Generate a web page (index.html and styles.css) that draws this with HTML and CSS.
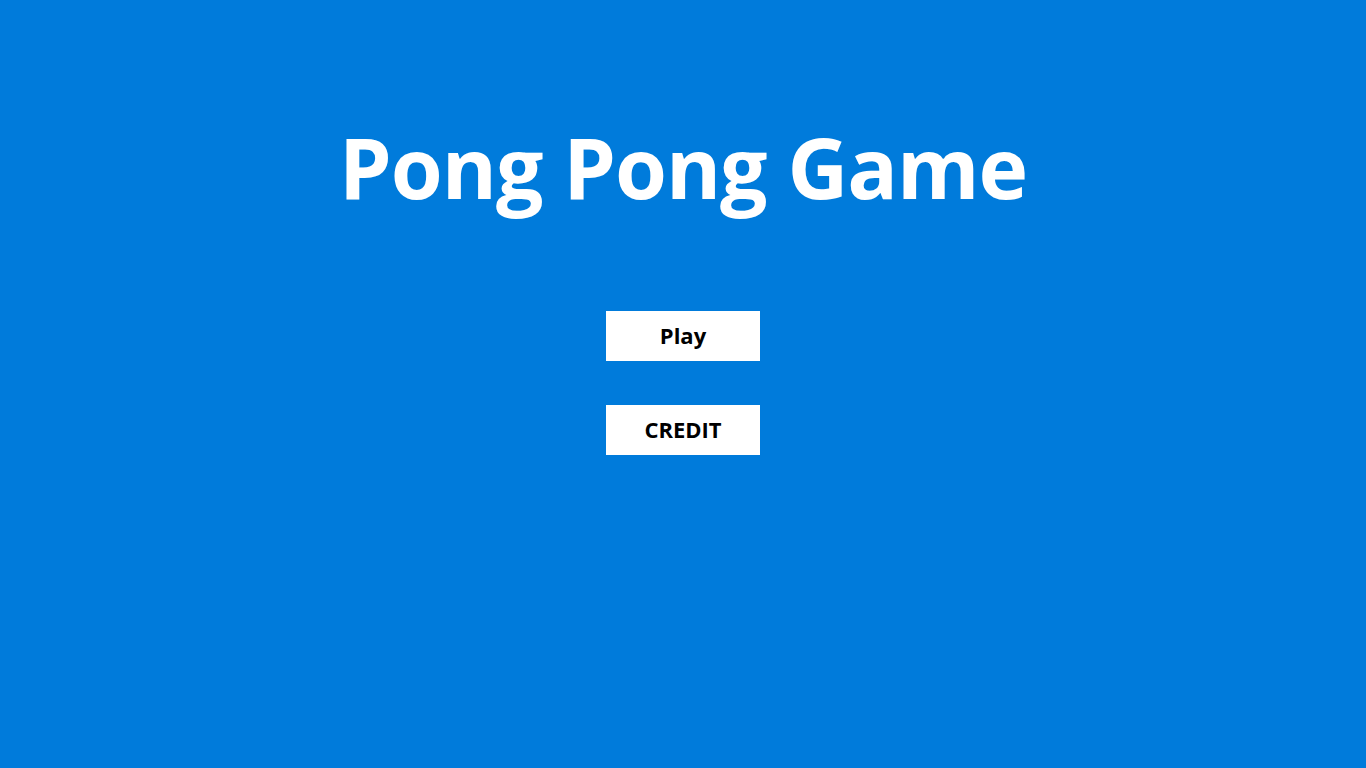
FILE: index.html
```html
<!DOCTYPE html>
<html>
<head>
<meta charset="utf-8">
<title>Pong Pong Game</title>
<link rel="stylesheet" href="styles.css">
</head>
<body>
<main class="menu">
  <h1 class="title">Pong Pong Game</h1>
  <div class="buttons">
    <button class="btn">Play</button>
    <button class="btn">CREDIT</button>
  </div>
</main>
</body>
</html>
```
FILE: styles.css
```css
html, body {
  margin: 0;
  padding: 0;
  height: 100%;
}
body {
  background: #007bdb;
  font-family: "Open Sans", "Noto Sans", sans-serif;
}
.menu {
  display: flex;
  flex-direction: column;
  align-items: center;
  padding-top: 110px;
}
.title {
  margin: 0;
  color: #ffffff;
  font-size: 84px;
  font-weight: 700;
  line-height: 114px;
  letter-spacing: -1px;
}
.buttons {
  display: flex;
  flex-direction: column;
  gap: 44px;
  margin-top: 87px;
}
.btn {
  width: 154px;
  height: 50px;
  border: none;
  background: #ffffff;
  color: #000000;
  font-family: "Open Sans", "Noto Sans", sans-serif;
  font-size: 22px;
  font-weight: 700;
  padding: 0 0 2px 0;
}
```
